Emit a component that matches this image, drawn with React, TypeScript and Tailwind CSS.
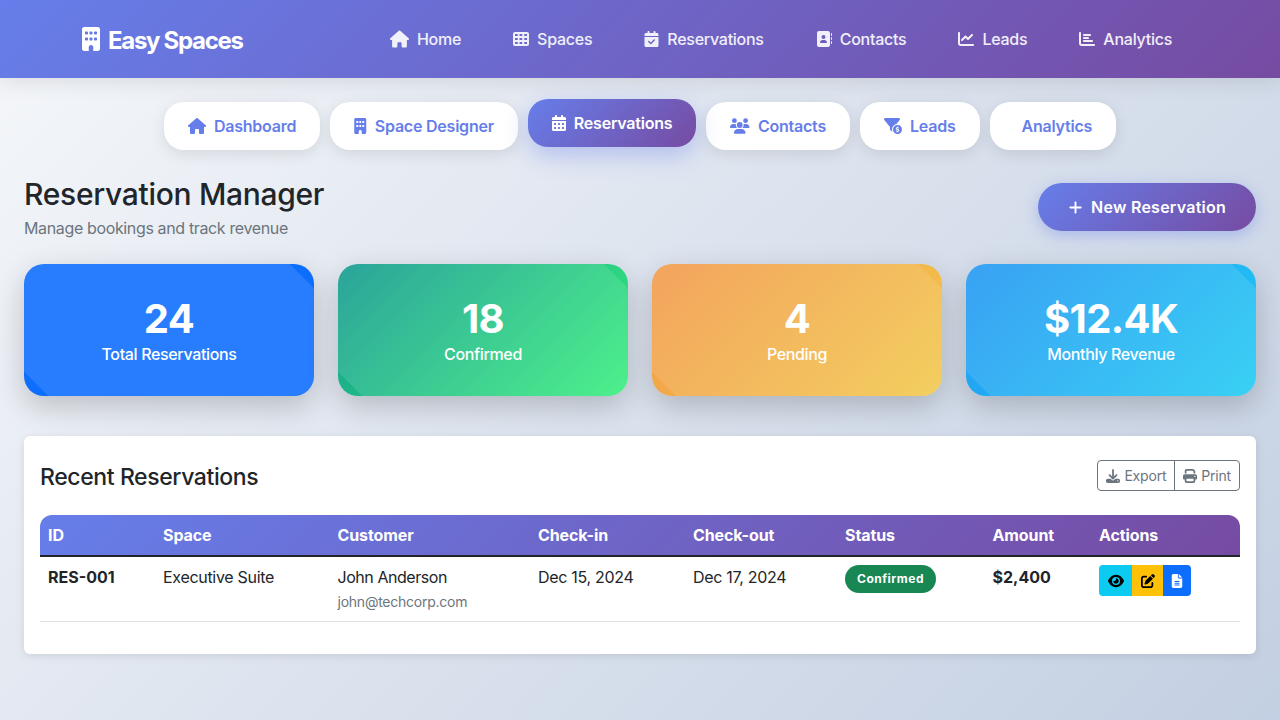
import type { ReactNode } from 'react'
import {
  FaAddressBook,
  FaBuilding,
  FaCalendarCheck,
  FaCalendarDays,
  FaChartBar,
  FaChartLine,
  FaDownload,
  FaEye,
  FaFileLines,
  FaFilterCircleDollar,
  FaHouse,
  FaPenToSquare,
  FaPlus,
  FaPrint,
  FaTableCells,
  FaUsers,
} from 'react-icons/fa6'

const navLinks = [
  { label: 'Home', icon: <FaHouse size={18} className="w-[19px]" /> },
  { label: 'Spaces', icon: <FaTableCells size={16} /> },
  { label: 'Reservations', icon: <FaCalendarCheck size={16} className="w-[15px]" /> },
  { label: 'Contacts', icon: <FaAddressBook size={16} /> },
  { label: 'Leads', icon: <FaChartLine size={16} /> },
  { label: 'Analytics', icon: <FaChartBar size={16} /> },
]

const tabs: { label: string; icon: ReactNode; active?: boolean }[] = [
  { label: 'Dashboard', icon: <FaHouse size={18} /> },
  { label: 'Space Designer', icon: <FaBuilding size={16} className="w-[12.5px]" /> },
  { label: 'Reservations', icon: <FaCalendarDays size={16} className="w-[14px]" />, active: true },
  { label: 'Contacts', icon: <FaUsers size={20} className="w-[19.5px]" /> },
  { label: 'Leads', icon: <FaFilterCircleDollar size={18} /> },
  { label: 'Analytics', icon: <span className="w-0" /> },
]

const stats = [
  { value: '24', label: 'Total Reservations', bg: 'bg-[#0d6efd]' },
  { value: '18', label: 'Confirmed', bg: 'bg-[linear-gradient(135deg,#11998e,#38ef7d)]' },
  { value: '4', label: 'Pending', bg: 'bg-[linear-gradient(135deg,#f2994a,#f2c94c)]' },
  { value: '$12.4K', label: 'Monthly Revenue', bg: 'bg-[linear-gradient(135deg,#2196f3,#21cbf3)]' },
]

const headers = ['ID', 'Space', 'Customer', 'Check-in', 'Check-out', 'Status', 'Amount', 'Actions']

export default function App() {
  return (
    <div className="min-h-[720px] overflow-hidden bg-[linear-gradient(135deg,#f5f7fa,#c3cfe2)] font-['Inter',sans-serif] text-[#212529]">
      <header className="flex h-[78px] items-center bg-[linear-gradient(135deg,#667eea,#764ba2)] pl-[82px] pr-[108px] shadow-[0_4px_20px_rgba(0,0,0,0.1)]">
        <div className="flex items-center gap-2 text-2xl font-bold tracking-[-1.3px] text-white">
          <FaBuilding size={24} className="w-[18px]" />
          <span className="mt-[3px]">Easy Spaces</span>
        </div>
        <nav className="ml-auto flex items-center gap-[52px] text-base font-medium tracking-[-0.26px] text-white/90">
          {navLinks.map((link) => (
            <a key={link.label} className="flex items-center gap-2">
              {link.icon}
              {link.label}
            </a>
          ))}
        </nav>
      </header>

      <div className="flex justify-center gap-[10px] pt-6">
        {tabs.map((tab) => (
          <button
            key={tab.label}
            className={
              tab.active
                ? 'flex h-12 -translate-y-[3px] items-center gap-2 rounded-[20px] bg-[linear-gradient(135deg,#667eea,#764ba2)] px-6 text-base font-semibold tracking-[-0.22px] text-white shadow-[0_8px_25px_rgba(102,126,234,0.4)]'
                : 'flex h-12 items-center gap-2 rounded-[20px] bg-white px-6 text-base font-semibold tracking-[-0.22px] text-[#667eea] shadow-[0_4px_15px_rgba(0,0,0,0.1)]'
            }
          >
            {tab.icon}
            {tab.label}
          </button>
        ))}
      </div>

      <main className="px-6">
        <div className="mt-[26px] flex items-start justify-between">
          <div>
            <h2 className="text-3xl leading-9 font-medium tracking-[-0.3px]">Reservation Manager</h2>
            <p className="mt-1 text-base leading-6 tracking-[-0.36px] text-[#6c757d]">Manage bookings and track revenue</p>
          </div>
          <button className="mt-[7px] flex h-12 items-center gap-2 rounded-full bg-[linear-gradient(135deg,#667eea,#764ba2)] px-[30px] text-base font-semibold tracking-[0.25px] text-white shadow-[0_4px_15px_rgba(102,126,234,0.4)]">
            <FaPlus size={15} />
            New Reservation
          </button>
        </div>

        <div className="mt-6 grid grid-cols-4 gap-6">
          {stats.map((stat) => (
            <div
              key={stat.label}
              className={`relative flex h-[132px] flex-col items-center justify-center overflow-hidden rounded-[20px] text-white shadow-[0_10px_30px_rgba(0,0,0,0.2)] ${stat.bg}`}
            >
              <div className="absolute top-1/2 left-1/2 h-[264px] w-[700px] -translate-x-1/2 -translate-y-1/2 rotate-45 bg-white/[0.11]" />
              <div className="relative mt-[1px] text-[40px] leading-[48px] font-bold tracking-[-0.6px]">{stat.value}</div>
              <div className="relative -mt-[1px] text-base leading-6 font-[450] tracking-[-0.35px]">{stat.label}</div>
            </div>
          ))}
        </div>

        <section className="mt-10 rounded-md bg-white px-4 pt-6 pb-8 shadow-[0_2px_8px_rgba(0,0,0,0.1)]">
          <div className="flex h-[31px] items-center justify-between">
            <h4 className="mt-[3px] text-[23px] font-medium tracking-[-0.4px]">Recent Reservations</h4>
            <div className="flex h-[31px] rounded border border-[#6c757d] text-sm tracking-[-0.2px] text-[#6c757d]">
              <button className="flex items-center gap-1 px-2">
                <FaDownload size={14} />
                Export
              </button>
              <button className="flex items-center gap-1 border-l border-[#6c757d] px-2">
                <FaPrint size={14} />
                Print
              </button>
            </div>
          </div>

          <table className="mt-6 w-full table-fixed border-collapse text-left text-base tracking-[-0.3px]">
            <colgroup>
              <col className="w-[115px]" />
              <col className="w-[174.5px]" />
              <col className="w-[200.5px]" />
              <col className="w-[155px]" />
              <col className="w-[152px]" />
              <col className="w-[147.5px]" />
              <col className="w-[106.5px]" />
              <col className="w-[149px]" />
            </colgroup>
            <thead>
              <tr className="h-[41px] bg-[linear-gradient(135deg,#667eea,#764ba2)] text-white">
                {headers.map((header, i) => (
                  <th
                    key={header}
                    className={`px-2 pb-px font-bold tracking-[-0.1px] ${i === 0 ? 'rounded-tl-xl' : ''} ${i === headers.length - 1 ? 'rounded-tr-xl' : ''}`}
                  >
                    {header}
                  </th>
                ))}
              </tr>
            </thead>
            <tbody>
              <tr className="h-[65px] border-t-2 border-b border-t-[#212529] border-b-[#dee2e6] align-top">
                <td className="px-2 pt-2 font-bold tracking-normal">RES-001</td>
                <td className="px-2 pt-2">Executive Suite</td>
                <td className="px-2 pt-2">
                  <span className="tracking-[-0.45px]">John Anderson</span>
                  <div className="mt-[2px] text-sm leading-[21px] tracking-[-0.24px] text-[#6c757d]">john@techcorp.com</div>
                </td>
                <td className="px-2 pt-2">Dec 15, 2024</td>
                <td className="px-2 pt-2">Dec 17, 2024</td>
                <td className="px-2 pt-2">
                  <span className="inline-flex h-7 items-center rounded-full bg-[#198754] px-3 text-xs font-bold tracking-[0.5px] text-white">
                    Confirmed
                  </span>
                </td>
                <td className="px-2 pt-2 font-bold tracking-normal">$2,400</td>
                <td className="px-2 pt-2">
                  <div className="flex h-[31px] w-fit overflow-hidden rounded">
                    <span className="flex w-[33px] items-center justify-center bg-[#0dcaf0] text-black">
                      <FaEye size={16} />
                    </span>
                    <span className="flex w-[31px] items-center justify-center bg-[#ffc107] text-black">
                      <FaPenToSquare size={14} />
                    </span>
                    <span className="flex w-[28px] items-center justify-center bg-[#0d6efd] text-white">
                      <FaFileLines size={14} />
                    </span>
                  </div>
                </td>
              </tr>
            </tbody>
          </table>
        </section>
      </main>
    </div>
  )
}
